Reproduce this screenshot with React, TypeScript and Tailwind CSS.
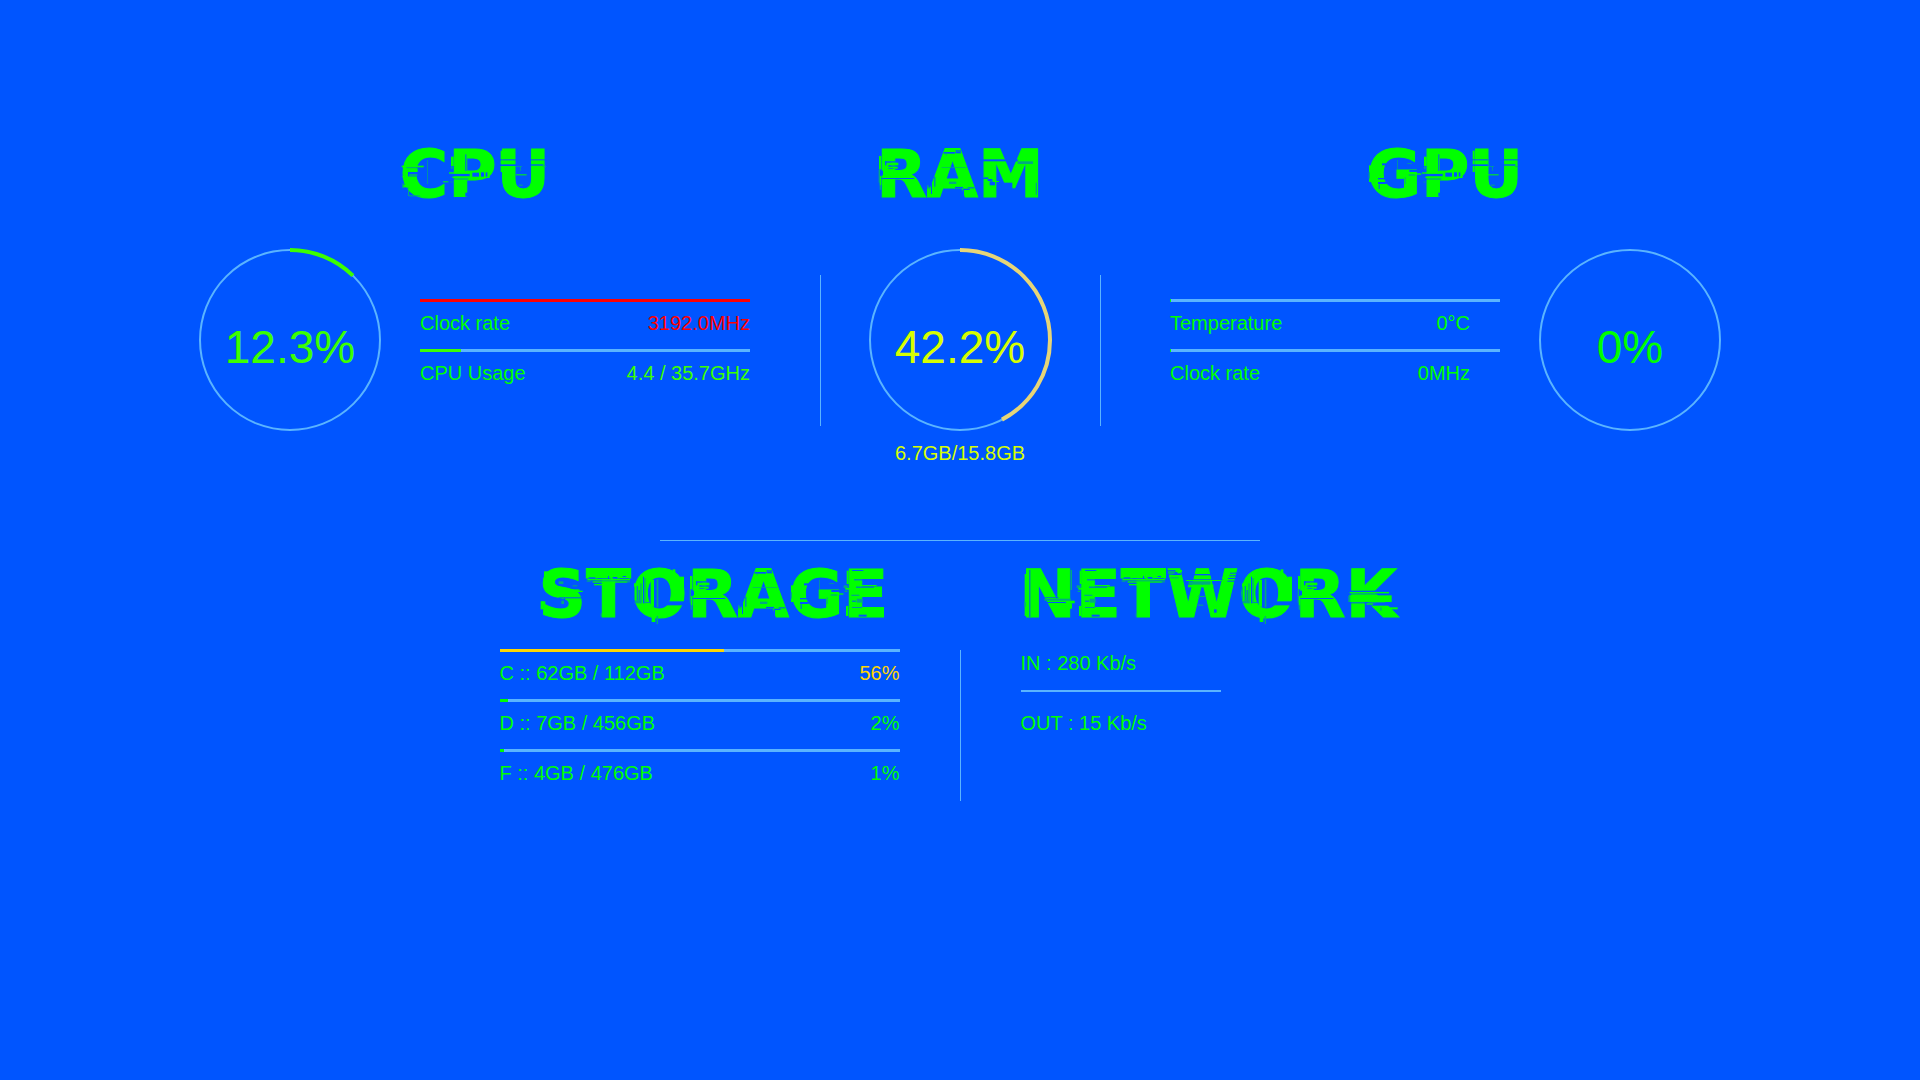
type Rect = [number, number, number, number];
type Glitch = { x: number; off: Rect[]; on: Rect[]; half: Rect[] };

// Displaced slices for each letter. `x` is the letter's side bearing; every
// rectangle is [x, y, width, height] in thirds of a pixel from the cap top.
const GLITCH: Record<string, Glitch> = {
  C: {
    x: 9,
    off: [[10, 52, 36, 3], [15, 66, 30, 13], [0, 113, 16, 3], [118, 97, 14, 3], [4, 122, 8, 10]],
    on: [[-4, 47, 66, 5], [-2, 78, 10, 4], [0, 55, 44, 11], [120, 94, 16, 3], [0, 104, 14, 8]],
    half: [[18, 72, 25, 7], [15, 120, 3, 18], [18, 136, 32, 3], [73, 30, 2, 72], [-2, 100, 4, 14]],
  },
  P: {
    x: 15,
    off: [[37, 13, 3, 50], [-5, 71, 56, 8], [0, 86, 46, 2], [37, 128, 10, 12]],
    on: [[-12, 67, 60, 4], [-6, 20, 8, 28], [50, 64, 60, 20], [-2, 80, 108, 4]],
    half: [[-6, 50, 5, 6], [-8, 95, 6, 2]],
  },
  U: {
    x: 15,
    off: [[-4, 28, 46, 3], [86, 28, 48, 3], [-4, 43, 46, 5], [86, 43, 38, 4]],
    on: [[-4, 2, 6, 26], [-4, 31, 6, 12], [-4, 48, 6, 18], [42, 73, 32, 3]],
    half: [[42, 49, 18, 2], [55, 49, 2, 14], [50, 104, 12, 3], [124, 48, 8, 3]],
  },
  R: {
    x: 15,
    off: [[12, 34, 30, 4], [12, 34, 4, 12], [22, 46, 24, 4], [0, 84, 100, 3], [0, 62, 6, 14], [22, 54, 22, 2]],
    on: [[-6, 18, 7, 40], [-4, 78, 5, 28], [30, 38, 22, 8], [36, 50, 14, 6]],
    half: [[-7, 58, 4, 40], [-4, 105, 4, 14], [4, 141, 4, 3]],
  },
  A: {
    x: 0,
    off: [[50, 6, 34, 5], [86, 0, 16, 10], [12, 92, 3, 40], [22, 80, 3, 30], [84, 110, 24, 5], [108, 116, 20, 4], [108, 118, 3, 22], [122, 112, 20, 3]],
    on: [[88, 2, 14, 2], [84, 104, 56, 6], [124, 128, 26, 6], [0, 112, 8, 28], [104, 14, 4, 12]],
    half: [[44, 52, 74, 2], [66, 95, 22, 7], [0, 106, 5, 10], [56, 8, 3, 8]],
  },
  M: {
    x: 15,
    off: [[-2, 28, 108, 6], [0, 82, 16, 5], [14, 87, 14, 6], [20, 94, 16, 12], [56, 98, 32, 20]],
    on: [[104, 28, 60, 5], [155, 12, 9, 30], [30, 93, 18, 3]],
    half: [[104, 34, 46, 8], [158, 98, 4, 36], [0, 80, 8, 3]],
  },
  G: {
    x: 9,
    off: [[36, 40, 20, 6], [24, 84, 26, 4], [24, 96, 26, 6], [26, 103, 3, 14], [118, 60, 30, 6], [116, 72, 20, 4]],
    on: [[-3, 46, 8, 50], [22, 14, 14, 16], [110, 70, 44, 4], [84, 70, 20, 14]],
    half: [[104, 82, 3, 20], [82, 30, 2, 28], [-4, 66, 4, 20], [112, 40, 14, 2]],
  },
  S: {
    x: 9,
    off: [[44, 28, 30, 4], [40, 32, 8, 8], [46, 42, 40, 4], [50, 82, 76, 3], [52, 86, 4, 16], [66, 84, 3, 20], [60, 102, 14, 3], [86, 52, 24, 3]],
    on: [[6, 4, 16, 14], [60, 58, 52, 7], [88, 62, 34, 4], [-2, 94, 12, 10], [-4, 94, 8, 24]],
    half: [[50, 34, 14, 8], [58, 92, 8, 10], [92, 46, 14, 3]],
  },
  T: {
    x: 0,
    off: [[8, 22, 20, 4], [34, 25, 40, 3], [80, 21, 14, 5], [100, 25, 28, 4], [14, 30, 30, 2], [66, 18, 3, 12], [110, 18, 10, 3]],
    on: [[4, 27, 128, 4], [20, 34, 104, 4], [24, 42, 40, 4]],
    half: [[30, 31, 70, 3], [2, 32, 12, 3], [120, 34, 12, 3], [44, 130, 4, 10]],
  },
  O: {
    x: 9,
    off: [[8, 48, 3, 44], [14, 60, 3, 36], [20, 40, 2, 60], [27, 20, 3, 80], [30, 96, 62, 2], [92, 94, 66, 12]],
    on: [[50, 30, 10, 80], [0, 40, 7, 50], [53, 138, 11, 18], [116, -2, 8, 14], [138, 20, 12, 72]],
    half: [[31, 24, 4, 76], [68, 28, 5, 84], [68, 138, 4, 24], [2, 92, 20, 8], [0, 50, 3, 40]],
  },
  E: {
    x: 15,
    off: [[18, 28, 26, 3], [24, 50, 54, 3], [12, 92, 12, 3], [12, 112, 30, 2], [32, 134, 24, 6], [12, 0, 34, 3]],
    on: [[-8, 54, 24, 5], [-4, 2, 6, 40], [-6, 108, 7, 30], [30, 45, 56, 3]],
    half: [[-13, 46, 12, 8], [26, 86, 18, 12], [10, 74, 24, 4], [-10, 62, 8, 4]],
  },
  N: {
    x: 15,
    off: [[10, 0, 3, 141], [58, 82, 40, 2], [62, 96, 60, 3]],
    on: [[-4, 12, 5, 126], [120, 92, 26, 8], [122, 100, 16, 16]],
    half: [[55, 86, 80, 6], [-6, 96, 5, 14], [134, 0, 4, 60]],
  },
  W: {
    x: 6,
    off: [[-2, 0, 30, 14], [14, 10, 26, 5], [52, 28, 112, 2], [186, 8, 28, 3], [184, 16, 28, 3], [180, 24, 30, 3], [178, 32, 28, 3], [152, 6, 3, 34], [138, 118, 8, 10], [70, 12, 60, 4]],
    on: [[22, 0, 20, 6], [4, 16, 36, 6], [54, 30, 106, 3], [60, 44, 76, 8]],
    half: [[0, 2, 20, 10], [62, 34, 66, 10], [90, 78, 22, 3], [90, 104, 16, 3], [8, 22, 24, 3]],
  },
  K: {
    x: 15,
    off: [[-2, 62, 120, 4], [-2, 70, 110, 3], [48, 97, 90, 10], [-2, 97, 50, 3]],
    on: [[-4, 66, 118, 4], [-6, 76, 128, 20], [46, 100, 20, 4], [86, 112, 54, 6]],
    half: [[-8, 78, 6, 18], [88, 112, 4, 10], [60, 97, 14, 3]],
  },
};

function Rects({ list, className }: { list: Rect[]; className: string }) {
  return (
    <g className={className}>
      {list.map(([x, y, w, h]) => (
        <rect key={`${x}-${y}-${w}`} x={x} y={y} width={w} height={h} />
      ))}
    </g>
  );
}

function GlitchTitle({ text }: { text: string }) {
  return (
    <h2 className="whitespace-nowrap font-[DejaVu_Sans,sans-serif] text-[66px] leading-[64px] font-bold text-[#00ff00] [-webkit-text-stroke:1px_#00ff00]">
      {text.split("").map((letter, i) => {
        const g = GLITCH[letter];
        return (
          <span key={i} className="relative inline-block">
            {letter}
            <svg
              aria-hidden="true"
              viewBox="0 0 240 192"
              className="pointer-events-none absolute top-0 left-0 h-16 w-20 overflow-visible"
            >
              <g transform={`translate(${g.x} 21)`}>
                <Rects list={g.off} className="fill-[#0055ff]" />
                <Rects list={g.on} className="fill-[#00ff00]" />
                <Rects list={g.half} className="fill-[#00aa80]" />
                {letter === "P" && (
                  <Rects list={[[58, 68, 20, 12], [84, 67, 9, 13], [98, 67, 5, 13]]} className="fill-[#0055ff]" />
                )}
              </g>
            </svg>
          </span>
        );
      })}
    </h2>
  );
}

function Ring({ value, label, arc, text }: { value: number; label: string; arc: string; text: string }) {
  const r = 90;
  const length = 2 * Math.PI * r;
  return (
    <div className="relative grid size-[180px] shrink-0 place-items-center pt-[14px]">
      <svg viewBox="0 0 180 180" aria-hidden="true" className="absolute inset-0 size-full -rotate-90 overflow-visible">
        <circle cx="90" cy="90" r={r} fill="none" strokeWidth="2" className="stroke-[#5ab4ff]" />
        {value > 0 && (
          <circle
            cx="90"
            cy="90"
            r={r}
            fill="none"
            strokeWidth="4"
            strokeDasharray={`${(length * value) / 100} ${length}`}
            className={arc}
          />
        )}
      </svg>
      <span className={`relative text-[46px] leading-[46px] ${text}`}>{label}</span>
    </div>
  );
}

type StatProps = { label: string; value: string; percent: number; bar: string; text: string; pad: string };

function Stat({ label, value, percent, bar, text, pad }: StatProps) {
  return (
    <li className="h-[50px]">
      <div className="h-[3px] bg-[#5ab4ff]">
        <div className={`h-full ${bar}`} style={{ width: `${percent}%` }} />
      </div>
      <div className={`mt-[9px] flex justify-between ${pad}`}>
        <span>{label}</span>
        <span className={text}>{value}</span>
      </div>
    </li>
  );
}

export default function App() {
  const green = "text-[#00ff00]";
  return (
    <main className="min-h-screen bg-[#0055ff] pt-[143px] font-[Liberation_Sans,Arial,sans-serif] text-[20px] leading-6 text-[#00ff00]">
      <div className="flex justify-center">
        <section className="flex w-[550px] flex-col items-center">
          <GlitchTitle text="CPU" />
          <div className="mt-[43px] flex w-full gap-10">
            <Ring value={12.3} label="12.3%" arc="stroke-[#3cff00]" text="text-[#3cff00]" />
            <ul className="mt-[49px] flex-1">
              <Stat label="Clock rate" value="3192.0MHz" percent={100} bar="bg-[#ff0000]" text="text-[#ff0000]" pad="" />
              <Stat label="CPU Usage" value="4.4 / 35.7GHz" percent={12.4} bar="bg-[#3cff00]" text="text-[#3cff00]" pad="" />
            </ul>
          </div>
        </section>

        <div className="mt-[132px] mr-[49px] ml-[70px] h-[151px] w-px bg-[#5ab4ff]" />

        <section className="flex w-[180px] flex-col items-center text-[#d7ff00]">
          <GlitchTitle text="RAM" />
          <div className="mt-[43px]">
            <Ring value={42.2} label="42.2%" arc="stroke-[#e6d578]" text="text-[#d7ff00]" />
          </div>
          <p className="mt-[11px]">6.7GB/15.8GB</p>
        </section>

        <div className="mt-[132px] mr-[69px] ml-[50px] h-[151px] w-px bg-[#5ab4ff]" />

        <section className="flex w-[550px] flex-col items-center">
          <GlitchTitle text="GPU" />
          <div className="mt-[43px] flex w-full gap-10">
            <ul className="mt-[49px] flex-1">
              <Stat label="Temperature" value="0°C" percent={0.3} bar="bg-[#00ff00]" text={green} pad="pr-[30px]" />
              <Stat label="Clock rate" value="0MHz" percent={0.3} bar="bg-[#00ff00]" text={green} pad="pr-[30px]" />
            </ul>
            <Ring value={0} label="0%" arc="" text={green} />
          </div>
        </section>
      </div>

      <div className="mx-auto mt-[75px] h-px w-[600px] bg-[#5ab4ff]" />

      <div className="mt-[22px] flex justify-center">
        <section className="w-[400px]">
          <div className="flex justify-center pl-7">
            <GlitchTitle text="STORAGE" />
          </div>
          <ul className="mt-[22px]">
            <Stat label="C :: 62GB / 112GB" value="56%" percent={56} bar="bg-[#ffd700]" text="text-[#ffd700]" pad="" />
            <Stat label="D :: 7GB / 456GB" value="2%" percent={2} bar="bg-[#00ff00]" text={green} pad="" />
            <Stat label="F :: 4GB / 476GB" value="1%" percent={1} bar="bg-[#00ff00]" text={green} pad="" />
          </ul>
        </section>

        <div className="mx-[60px] mt-[87px] h-[151px] w-px bg-[#5ab4ff]" />

        <section className="w-[400px]">
          <GlitchTitle text="NETWORK" />
          <p className="mt-6">IN : 280 Kb/s</p>
          <div className="mt-[15px] h-0.5 w-[200px] bg-[#5ab4ff]" />
          <p className="mt-[19px]">OUT : 15 Kb/s</p>
        </section>
      </div>
    </main>
  );
}
